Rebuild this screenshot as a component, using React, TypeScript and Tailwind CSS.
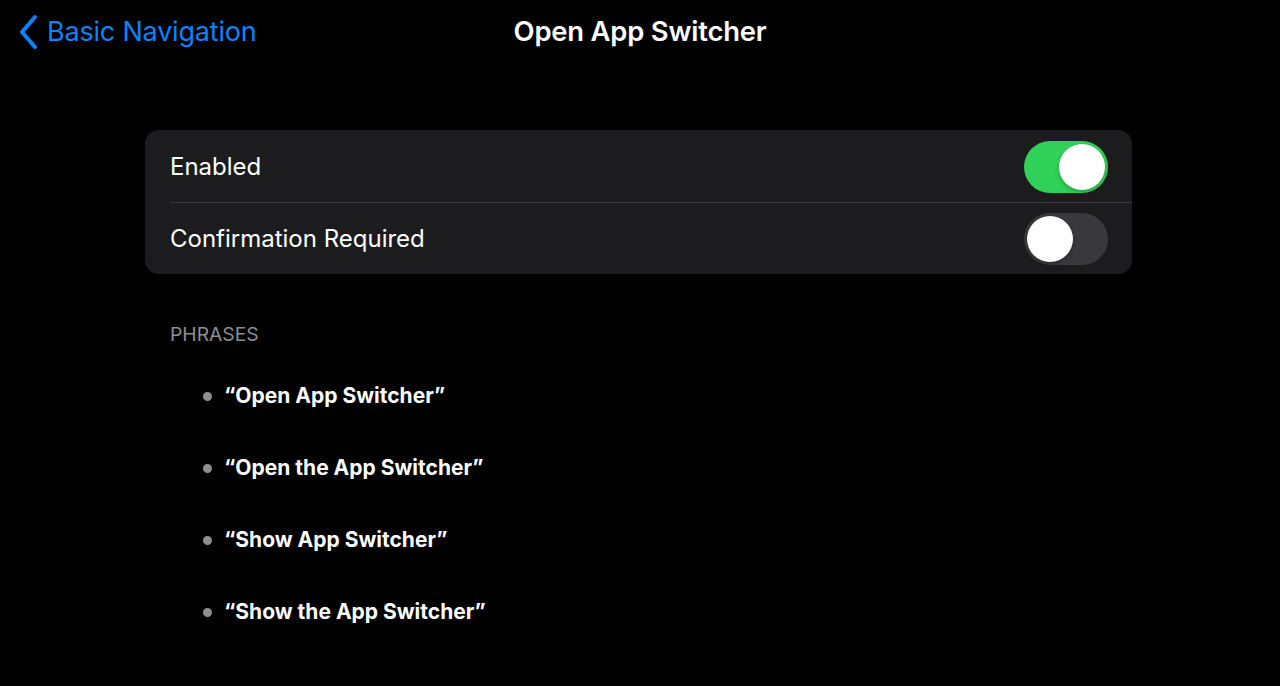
const phrases = [
  '“Open App Switcher”',
  '“Open the App Switcher”',
  '“Show App Switcher”',
  '“Show the App Switcher”',
]

function Toggle({ on }: { on: boolean }) {
  return (
    <div
      className={`w-[84px] h-[52px] rounded-full p-[3px] flex items-center ${
        on ? 'bg-[#30d158] justify-end' : 'bg-[#39393d] justify-start'
      }`}
    >
      <div className="w-[46px] h-[46px] rounded-full bg-white shadow-[0_2px_4px_rgba(0,0,0,0.25)]" />
    </div>
  )
}

export default function App() {
  return (
    <div className="w-[1280px] h-[686px] bg-black text-white font-['Inter',sans-serif] overflow-hidden">
      {/* Nav bar */}
      <div className="relative h-[64px] flex items-center justify-center">
        <div className="absolute left-[18px] top-0 h-[64px] flex items-center gap-[8px] text-[#0a84ff]">
          <svg width="21" height="36" viewBox="0 0 21 36" fill="none">
            <path d="M17 3 L4 18 L17 33" stroke="currentColor" strokeWidth="4" strokeLinecap="round" strokeLinejoin="round" />
          </svg>
          <span className="text-[27px] tracking-[-0.2px]">Basic Navigation</span>
        </div>
        <h1 className="text-[27.4px] font-semibold tracking-[-0.2px]">Open App Switcher</h1>
      </div>

      {/* Settings group */}
      <div className="mt-[66px] mx-[145px] w-[987px] rounded-[14px] bg-[#1c1c1e]">
        <div className="h-[72px] flex items-center justify-between pl-[25px] pr-[24px] pt-[2px]">
          <span className="text-[24px]">Enabled</span>
          <Toggle on />
        </div>
        <div className="ml-[25px] h-px bg-[#38383a]" />
        <div className="h-[71px] flex items-center justify-between pl-[25px] pr-[24px]">
          <span className="text-[24px]">Confirmation Required</span>
          <Toggle on={false} />
        </div>
      </div>

      {/* Phrases */}
      <div className="mt-[48px] ml-[170px] text-[19.3px] text-[#8e8e93] leading-[24px]">PHRASES</div>
      <ul className="mt-[14px] ml-[203px]">
        {phrases.map((p) => (
          <li key={p} className="h-[72px] flex items-center gap-[12px]">
            <span className="w-[9px] h-[9px] rounded-full bg-[#8e8e93]" />
            <span className="text-[21px] font-bold">{p}</span>
          </li>
        ))}
      </ul>
    </div>
  )
}
